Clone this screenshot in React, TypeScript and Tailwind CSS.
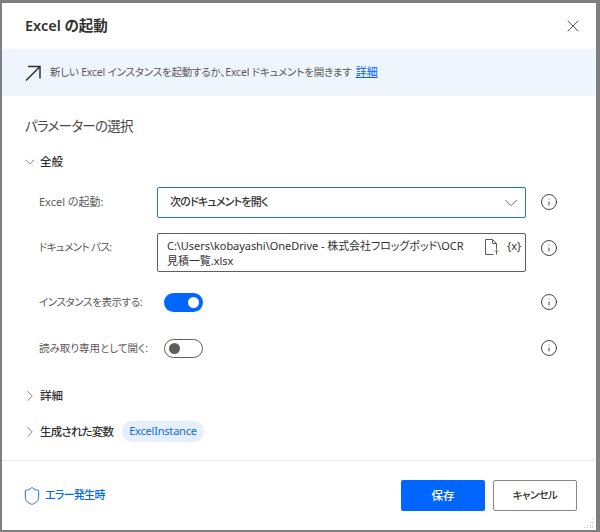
import React from 'react';
import { X, ChevronDown, ChevronRight, Info, Shield } from 'lucide-react';

const InfoIcon = () => <Info size={18} strokeWidth={1.2} className="text-[#323130]" />;

const Toggle = ({ on }: { on: boolean }) =>
  on ? (
    <div className="w-[39px] h-[19px] rounded-full bg-[#0066ff] flex items-center justify-end pr-[4px]">
      <div className="w-[11px] h-[11px] rounded-full bg-white" />
    </div>
  ) : (
    <div className="w-[39px] h-[19px] rounded-full border border-[#605e5c] flex items-center pl-[4px]">
      <div className="w-[11px] h-[11px] rounded-full bg-[#605e5c]" />
    </div>
  );

const Row = ({ label, labelClass, className, children }: { label: string; labelClass: string; className: string; children: React.ReactNode }) => (
  <div className={`flex items-center ${className}`}>
    <div className={`w-[118px] flex-none text-[#5c5a58] whitespace-nowrap ${labelClass}`}>{label}</div>
    <div className="w-[369px] flex-none">{children}</div>
    <div className="ml-[14px] flex-none flex items-center pb-[2px]"><InfoIcon /></div>
  </div>
);

export default function App() {
  return (
    <div className="w-[600px] h-[532px] bg-[#7f7f7f] overflow-hidden pt-[3px] pl-[2px] font-['Noto_Sans','Noto_Sans_CJK_JP',sans-serif] [font-feature-settings:'palt']">
      <div className="w-[594px] h-[527px] bg-white flex flex-col relative">
        {/* Header */}
        <div className="h-[46px] flex-none flex items-center justify-between pl-[23px] pr-[13px]">
          <div className="text-[14.5px] font-semibold text-[#323130]">Excel の起動</div>
          <X size={20} strokeWidth={1} className="text-[#323130]" />
        </div>

        {/* Description */}
        <div className="h-[47px] flex-none bg-[#eff5fd] flex items-center pl-[23px] text-[10.5px] text-[#5c5a58]">
          <svg width="16" height="16" viewBox="0 0 16 16" fill="none" stroke="#323130" strokeWidth="1.5" className="flex-none">
            <path d="M1 15.5 15 1.5M3 1.5h12v12" />
          </svg>
          <span className="ml-[9px] tracking-[-0.2px]">新しい Excel インスタンスを起動するか、Excel ドキュメントを開きます</span>
          <span className="ml-[4px] text-[11px] text-[#0066ff] underline">詳細</span>
        </div>

        {/* Parameters */}
        <div className="flex-1 pl-[23px]">
          <div className="mt-[18px] text-[13.5px] tracking-[-0.7px] leading-[24px] text-[#4a4846]">パラメーターの選択</div>
          <div className="mt-[14px] flex items-center h-[20px] text-[11.5px] font-medium text-[#323130]">
            <ChevronDown size={16} strokeWidth={1} className="text-[#605e5c] -ml-[3px] mr-[2px]" />
            全般
          </div>

          <div className="pl-[14px]">
            <Row label="Excel の起動:" labelClass="text-[11px]" className="mt-[15px] h-[31px]">
              <div className="h-[31px] border border-[#1a73e8] rounded-[2px] flex items-center justify-between pl-[12px] pr-[3px] text-[11px] tracking-[-0.8px] font-medium text-[#323130]">
                次のドキュメントを開く
                <ChevronDown size={22} strokeWidth={0.9} className="text-[#5c4a3a]" />
              </div>
            </Row>

            <div className="mt-[15px] h-[39px] flex items-start">
              <div className="w-[118px] flex-none pt-[7px] text-[10.5px] tracking-[-0.6px] text-[#5c5a58] whitespace-nowrap">ドキュメント パス:</div>
              <div className="w-[369px] flex-none h-[39px] border border-[#605e5c] rounded-[2px] flex pl-[9px] pr-[3px] text-[11px] leading-[15px] text-[#323130]">
                <div className="w-[318px] flex-none pt-[4px] tracking-[-0.05px]">
                  <div className="whitespace-nowrap">C:\Users\kobayashi\OneDrive - 株式会社フロッグポッド\OCR</div>
                  <div className="whitespace-nowrap">見積一覧.xlsx</div>
                </div>
                <svg width="14" height="16" viewBox="0 0 14 16" fill="none" stroke="#5c5a58" strokeWidth="1" className="flex-none mt-[5px]">
                  <path d="M.5 15.5V.5h7l4 4v6M7.5.5v4h4M.5 15.5h8" />
                  <path d="M11.5 15.5v-4M10 12.5l1.5-1.5 1.5 1.5" />
                </svg>
                <div className="ml-[8px] text-[11px] text-[#323130] pt-[4px] whitespace-nowrap">{'{x}'}</div>
              </div>
              <div className="ml-[14px] flex-none pt-[6px]"><InfoIcon /></div>
            </div>

            <Row label="インスタンスを表示する:" labelClass="text-[10.5px] tracking-[-0.4px]" className="mt-[21px] h-[19px]">
              <div className="pl-[7px]"><Toggle on /></div>
            </Row>

            <Row label="読み取り専用として開く:" labelClass="text-[10.5px]" className="mt-[27px] h-[19px]">
              <div className="pl-[7px]"><Toggle on={false} /></div>
            </Row>
          </div>

          <div className="mt-[28px] flex items-center h-[20px] text-[11.5px] font-medium text-[#323130]">
            <ChevronRight size={18} strokeWidth={1} className="text-[#605e5c] -ml-[4px] mr-[1px]" />
            詳細
          </div>
          <div className="mt-[15px] flex items-center h-[21px] text-[11.5px] tracking-[-0.8px] font-medium text-[#323130]">
            <ChevronRight size={18} strokeWidth={1} className="text-[#605e5c] -ml-[4px] mr-[1px]" />
            生成された変数
            <div className="ml-[9px] h-[21px] px-[7px] rounded-[10px] bg-[#e5effd] text-[#0f6cdd] text-[11px] tracking-[-0.2px] font-normal flex items-center">ExcelInstance</div>
          </div>
        </div>

        {/* Footer */}
        <div className="h-[70px] flex-none border-t border-[#e8e8e8] flex items-center justify-between pl-[20px] pr-[19px]">
          <div className="flex items-center text-[11px] tracking-[-0.7px] font-medium text-[#0066ff]">
            <Shield size={20} strokeWidth={1.1} className="mr-[3px]" />
            エラー発生時
          </div>
          <div className="flex items-center gap-[8px]">
            <div className="w-[84px] h-[31px] rounded-[2px] bg-[#0066ff] text-white text-[11.5px] font-medium flex items-center justify-center">保存</div>
            <div className="w-[84px] h-[31px] rounded-[2px] border border-[#8a8886] text-[#323130] text-[10.5px] tracking-[-0.6px] font-medium flex items-center justify-center">キャンセル</div>
          </div>
        </div>

        {/* Resize grip */}
        <svg width="10" height="10" viewBox="0 0 10 10" fill="#c8c8c8" className="absolute right-[2px] bottom-[1px]">
          <rect x="8" y="0" width="1" height="1" />
          <rect x="6" y="3" width="1" height="1" />
          <rect x="8" y="3" width="1" height="1" />
          <rect x="3" y="6" width="1" height="1" />
          <rect x="6" y="6" width="1" height="1" />
          <rect x="8" y="6" width="1" height="1" />
          <rect x="0" y="8" width="1" height="1" />
          <rect x="3" y="8" width="1" height="1" />
          <rect x="6" y="8" width="1" height="1" />
          <rect x="8" y="8" width="1" height="1" />
        </svg>
      </div>
    </div>
  );
}
